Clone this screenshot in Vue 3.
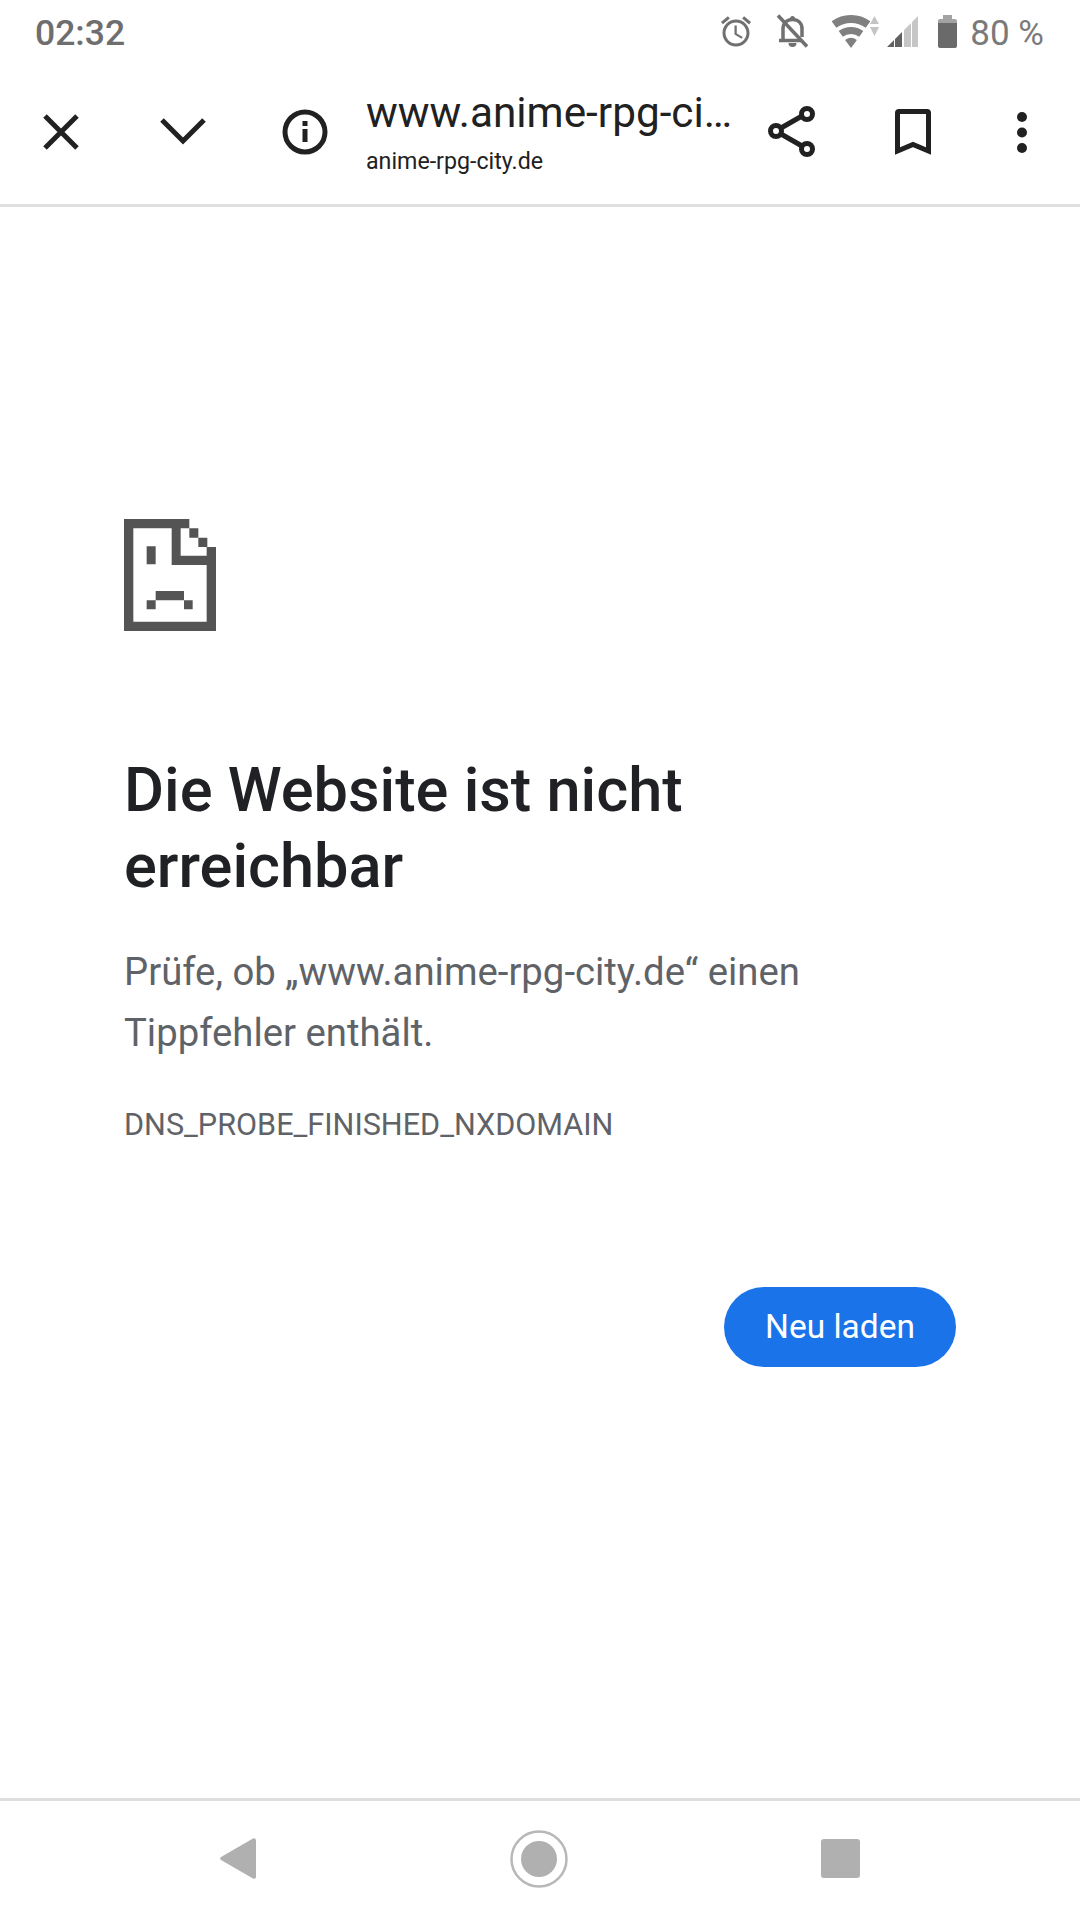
<template>
  <div class="page">
    <div class="status-bar">
      <span class="time">02:32</span>
      <div class="status-icons">
        <svg class="alarm" width="30" height="31" viewBox="2 1.8 20 20.4" fill="#707070">
          <path d="M22 5.72l-4.6-3.86-1.29 1.53 4.6 3.86L22 5.72zM7.88 3.39L6.6 1.86 2 5.71l1.29 1.53 4.59-3.85zM12.5 8H11v6l4.75 2.85.75-1.23-4-2.37V8zM12 4c-4.97 0-9 4.03-9 9s4.02 9 9 9c4.97 0 9-4.03 9-9s-4.03-9-9-9zm0 16c-3.87 0-7-3.13-7-7s3.13-7 7-7 7 3.13 7 7-3.13 7-7 7z" />
        </svg>
        <svg class="bell" width="33" height="34" viewBox="0 0 33 34" fill="none" stroke="#707070">
          <path d="M7 26V15c0-6 4-9.5 9.500-9.500S26 9 26 15v8" stroke-width="3.500" />
          <path d="M3 26.500h22" stroke-width="3.500" />
          <path d="M2 1.500l29 31" stroke-width="3.500" />
          <path d="M14 4.500a2.500 2.500 0 0 1 5 0zM12.500 29h8a4 4 0 0 1-8 0z" fill="#707070" stroke="none" />
        </svg>
        <svg class="wifi" width="38" height="33" viewBox="0 0 38 33" fill="#808080">
          <path d="M-.4 6.300A33 33 0 0 1 38.400 6.300L33.700 12.800A25 25 0 0 0 4.300 12.800Z" />
          <path d="M6.700 16A21 21 0 0 1 31.300 16L27.200 21.700A14 14 0 0 0 10.800 21.700Z" />
          <path d="M13.100 24.900A10 10 0 0 1 24.900 24.900L19 33Z" />
        </svg>
        <svg class="arrows" width="9" height="20" viewBox="0 0 9 20" fill="#c4c4c4">
          <path d="M4.500 0L9 8H0zM0 11h9l-4.500 9z" />
        </svg>
        <svg class="signal" width="31" height="31" viewBox="0 0 31 31">
          <path d="M0 31L7 24V31ZM8 23L15 16V31H8Z" fill="#616161" />
          <path d="M17 14L24 7V31H17ZM25 6L31 0V31H25Z" fill="#c6c6c6" />
        </svg>
        <svg class="battery" width="19" height="33" viewBox="0 0 19 33">
          <path d="M5 0h9v4h3a2 2 0 0 1 2 2v2H0V6a2 2 0 0 1 2-2h3z" fill="#a3a3a3" />
          <path d="M0 8h19v23a2 2 0 0 1-2 2H2a2 2 0 0 1-2-2z" fill="#6a6a6a" />
        </svg>
        <span class="percent">80 %</span>
      </div>
    </div>

    <div class="toolbar">
      <div class="tool">
        <svg width="36" height="36" viewBox="0 0 36 36" fill="none" stroke="#212121" stroke-width="5">
          <path d="M2 2l32 32M34 2L2 34" />
        </svg>
      </div>
      <div class="tool">
        <svg width="46" height="28" viewBox="0 0 46 28" fill="none" stroke="#212121" stroke-width="5">
          <path d="M2 2l21 21L44 2" />
        </svg>
      </div>
      <div class="tool">
        <svg width="46" height="46" viewBox="0 0 46 46" fill="none">
          <circle cx="23" cy="23" r="20" stroke="#212121" stroke-width="5" />
          <path d="M20.500 12h5v5h-5zM20.500 20h5v13h-5z" fill="#212121" />
        </svg>
      </div>
      <div class="address">
        <div class="title">www.anime-rpg-ci…</div>
        <div class="domain">anime-rpg-city.de</div>
      </div>
      <div class="tool">
        <svg width="48" height="52" viewBox="0 0 48 52" fill="none" stroke="#212121" stroke-width="5">
          <circle cx="8" cy="25" r="5.500" />
          <circle cx="39" cy="8" r="5.500" />
          <circle cx="39" cy="43" r="5.500" />
          <path d="M13 22l21-12M13 28l21 12" />
        </svg>
      </div>
      <div class="tool bookmark">
        <svg width="36" height="46" viewBox="0 0 36 46" fill="none" stroke="#212121" stroke-width="5">
          <path d="M2.500 42V4Q2.500 2.500 4 2.500H32Q33.500 2.500 33.500 4V42L18 35.500Z" />
        </svg>
      </div>
      <div class="tool more">
        <svg width="10" height="41" viewBox="0 0 10 41" fill="#212121">
          <circle cx="5" cy="5" r="5" />
          <circle cx="5" cy="20.500" r="5" />
          <circle cx="5" cy="36" r="5" />
        </svg>
      </div>
    </div>

    <main class="content">
      <svg class="sad-page" width="92" height="112" viewBox="42 42 276 336" fill="#545454">
        <path fill-rule="evenodd" d="M42 42H238V70H265V98H292V126H318V378H42ZM70 70V350H290V180H185V70ZM212 70V152H290V126H265V98H238V70Z" />
        <path d="M110 124h27v54h-27zM137 258h85v28h-85zM110 286h27v27h-27zM222 286h26v27h-26z" />
      </svg>
      <h1 class="heading">Die Website ist nicht erreichbar</h1>
      <p class="message">Prüfe, ob „www.anime-rpg-city.de“ einen Tippfehler enthält.</p>
      <div class="error-code">DNS_PROBE_FINISHED_NXDOMAIN</div>
      <div class="actions">
        <button class="reload">Neu laden</button>
      </div>
    </main>

    <div class="nav-bar">
      <svg width="36" height="41" viewBox="0 0 36 41" fill="#b0b0b0">
        <path d="M33 .5a2 2 0 0 1 3 1.500V39a2 2 0 0 1-3 1.500L1 22a2 2 0 0 1 0-3z" />
      </svg>
      <svg width="58" height="58" viewBox="0 0 58 58" fill="#b0b0b0">
        <circle cx="29" cy="29" r="27.500" fill="none" stroke="#b8b8b8" stroke-width="2.500" />
        <circle cx="29" cy="29" r="18" />
      </svg>
      <svg width="39" height="39" viewBox="0 0 39 39" fill="#b0b0b0">
        <rect width="39" height="39" rx="3" />
      </svg>
    </div>
  </div>
</template>

<script setup>
</script>

<style>
html, body {
  margin: 0;
  background: #fff;
}
</style>

<style scoped>
.page {
  width: 1080px;
  height: 1920px;
  display: flex;
  flex-direction: column;
  background: #fff;
  font-family: Roboto, "Liberation Sans", sans-serif;
  overflow: hidden;
}

.status-bar {
  box-sizing: border-box;
  height: 60px;
  padding: 2px 36px 0 35px;
  display: flex;
  align-items: center;
  justify-content: space-between;
  color: #6e6e6e;
  font-size: 35.500px;
}

.time {
  position: relative;
  top: 2px;
  font-weight: 500;
}

.status-icons {
  display: flex;
  align-items: center;
}

.bell { margin-left: 25px; }
.wifi { margin-left: 23px; }
.arrows { margin-left: 0; margin-top: -10px; }
.signal { margin-left: 8px; }
.battery { margin-left: 20px; }

.percent {
  position: relative;
  top: 2px;
  margin-left: 13px;
  color: #7a7a7a;
  font-size: 35px;
  font-weight: 400;
}

.toolbar {
  box-sizing: border-box;
  height: 147px;
  padding-right: 10px;
  display: flex;
  border-bottom: 3px solid #dfe1de;
}

.tool {
  width: 122px;
  flex: none;
  display: flex;
  align-items: center;
  justify-content: center;
}

.bookmark {
  width: 120px;
}

.more {
  width: 97px;
}

.address {
  flex: 1;
  min-width: 0;
  padding-top: 26px;
  color: #212121;
}

.title {
  font-size: 42.300px;
  line-height: 54px;
  white-space: nowrap;
}

.domain {
  margin-top: 4px;
  font-size: 23.200px;
  line-height: 34px;
}

.content {
  flex: 1;
  padding: 312px 124px 0;
  display: flex;
  flex-direction: column;
  align-items: flex-start;
}

.sad-page {
  display: block;
}

.heading {
  margin: 121px 0 0;
  width: 640px;
  font-size: 61.300px;
  line-height: 76px;
  font-weight: 500;
  color: #202124;
}

.message {
  margin: 37px 0 0;
  font-size: 38.300px;
  line-height: 61px;
  color: #5f6368;
}

.error-code {
  margin-top: 42px;
  font-size: 30.600px;
  line-height: 40px;
  color: #5f6368;
}

.actions {
  align-self: stretch;
  display: flex;
  justify-content: flex-end;
  margin-top: 142px;
}

.reload {
  width: 232px;
  height: 80px;
  border: none;
  border-radius: 40px;
  padding: 0 0 2px;
  background: #1a73e8;
  color: #fff;
  font-family: inherit;
  font-size: 33.500px;
}

.nav-bar {
  box-sizing: border-box;
  height: 122px;
  padding: 0 0 4px 220px;
  display: flex;
  gap: 253.500px;
  align-items: center;
  border-top: 3px solid #dedede;
}
</style>
